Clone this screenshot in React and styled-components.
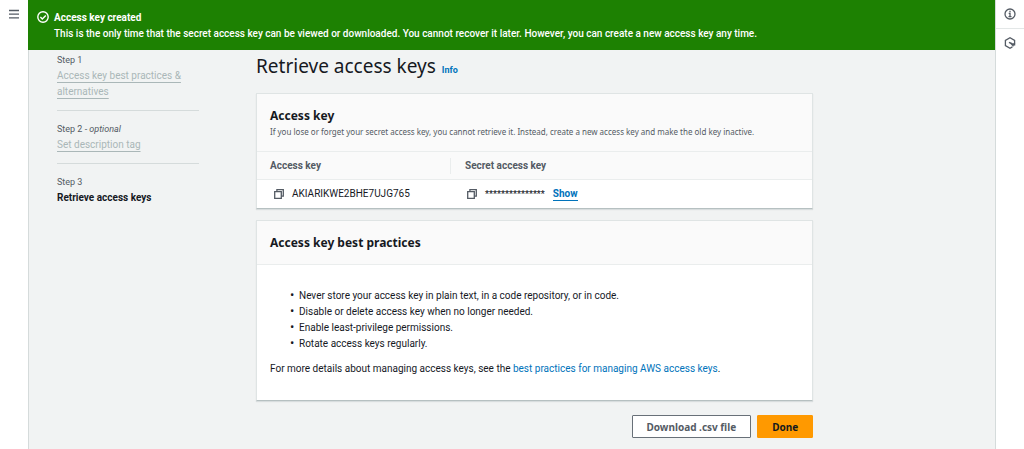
import React, { useState } from "react";
import styled, { createGlobalStyle } from "styled-components";

const displayFont = `"Noto Sans", "Open Sans", sans-serif`;

const GlobalStyle = createGlobalStyle`
  * {
    box-sizing: border-box;
  }
  body {
    margin: 0;
    background: #f1f3f3;
    color: #16191f;
    font-family: Roboto, "Open Sans", sans-serif;
    font-size: 10px;
    line-height: 16px;
  }
`;

const Shell = styled.div`
  display: grid;
  grid-template-columns: 28px minmax(0, 1fr) 28px;
  min-height: 100vh;
`;

const Rail = styled.aside`
  background: #fff;
`;

const RailButton = styled.button`
  display: flex;
  align-items: center;
  justify-content: center;
  width: 100%;
  height: 29px;
  padding: 0;
  border: none;
  border-bottom: 1px solid ${({ $divided }) => ($divided ? "#e3e7e7" : "transparent")};
  background: none;
  color: #545b64;
  cursor: pointer;
`;

const Main = styled.main`
  border-right: 1px solid #d5dbdb;
  box-shadow: inset 1px 0 #d5dbdb;
`;

const Flash = styled.div`
  display: flex;
  gap: 5px;
  padding: 9px 9px 8px;
  background: #1d8102;
  color: #fff;
  font-weight: 500;
`;

const FlashText = styled.p`
  margin: 0;
  padding-top: 1px;
`;

const FlashTitle = styled.strong`
  display: block;
  font-weight: 700;
`;

const Wizard = styled.div`
  display: grid;
  grid-template-columns: 142px minmax(0, 1fr);
  column-gap: 57px;
  padding: 0 18.8% 0 29px;
`;

const Steps = styled.ol`
  margin: 0;
  padding: 0;
  list-style: none;
`;

const Step = styled.li`
  padding: ${({ $first }) => ($first ? "2px" : "10px")} 0 10px;

  & + & {
    border-top: 1px solid #d5dbdb;
  }
`;

const StepLabel = styled.span`
  display: block;
  color: #545b64;
  font-size: 9px;
`;

const StepLink = styled.a`
  color: #aab7b8;
  text-decoration: underline;
  text-underline-offset: 3px;
`;

const StepCurrent = styled.strong`
  color: #16191f;
`;

const Content = styled.div`
  display: flex;
  flex-direction: column;
`;

const Heading = styled.div`
  display: flex;
  align-items: baseline;
  gap: 6px;
  padding: 4px 0 15px;
`;

const Title = styled.h1`
  margin: 0;
  font-family: ${displayFont};
  font-size: 19px;
  font-weight: 400;
  line-height: 24px;
`;

const InfoLink = styled.a`
  color: #0073bb;
  font-size: 9px;
  font-weight: 700;
  text-decoration: none;
`;

const Card = styled.section`
  margin-bottom: 11px;
  background: #fff;
  border: 1px solid #dfe4e4;
  border-bottom-color: #b6c0c1;
  box-shadow: 0 1px 1px rgba(0, 28, 36, 0.1);
`;

const CardHeader = styled.header`
  padding: 13px 13px 12px;
  background: #fafafa;
  border-bottom: 1px solid #eaeded;
`;

const CardTitle = styled.h2`
  margin: 0;
  font-family: ${displayFont};
  font-size: 12px;
  font-weight: 700;
  line-height: 18px;
`;

const CardHint = styled.p`
  margin: 0;
  color: #545b64;
  font-family: ${displayFont};
  font-size: 8px;
  line-height: 14px;
`;

const KeyTable = styled.table`
  width: 100%;
  border-collapse: collapse;
  table-layout: fixed;
`;

const HeadCell = styled.th`
  padding: 6px 0 5px;
  width: ${({ $width }) => $width};
  background: #fafafa;
  border-bottom: 1px solid #eaeded;
  color: #545b64;
  text-align: left;
`;

const HeadText = styled.span`
  display: block;
  padding-left: ${({ $divided }) => ($divided ? "14px" : "13px")};
  border-left: ${({ $divided }) => ($divided ? "1px solid #eaeded" : "none")};
`;

const Cell = styled.td`
  padding: 6px 17px;
`;

const KeyValue = styled.div`
  display: flex;
  align-items: center;
  gap: 8px;
`;

const Masked = styled.span`
  font-size: 9px;
  font-weight: 500;
`;

const IconButton = styled.button`
  display: flex;
  padding: 0;
  border: none;
  background: none;
  color: #545b64;
  cursor: pointer;
`;

const ShowButton = styled.button`
  padding: 0;
  border: none;
  border-bottom: 1px solid #0073bb;
  background: none;
  color: #0073bb;
  font: inherit;
  font-weight: 700;
  line-height: 12px;
  cursor: pointer;
`;

const CardBody = styled.div`
  padding: 23px 13px;
`;

const Practices = styled.ul`
  margin: 0 0 9px;
  padding-left: 29px;
  list-style-type: "•  ";

  li::marker {
    font-weight: 900;
  }
`;

const Note = styled.p`
  margin: 0;
`;

const NoteLink = styled.a`
  color: #0073bb;
  text-decoration: none;
`;

const Actions = styled.div`
  display: flex;
  justify-content: flex-end;
  gap: 6px;
  padding: 3px 0 11px;
`;

const Button = styled.button`
  height: 23px;
  padding: 0 14px;
  border: 1px solid ${({ $primary }) => ($primary ? "#ff9900" : "#687078")};
  border-radius: 1px;
  background: ${({ $primary }) => ($primary ? "#ff9900" : "#fff")};
  color: ${({ $primary }) => ($primary ? "#16191f" : "#545b64")};
  font-family: ${displayFont};
  font-size: 10px;
  font-weight: 700;
  cursor: pointer;
`;

const MenuIcon = () => (
  <svg width="12" height="12" viewBox="0 0 12 12" stroke="currentColor" strokeWidth="1.3" aria-hidden="true">
    <path d="M1 2.5h10M1 6.2h10M1 9.9h10" />
  </svg>
);

const InfoIcon = () => (
  <svg width="12" height="12" viewBox="0 0 12 12" fill="none" stroke="currentColor" strokeWidth="1.3" aria-hidden="true">
    <circle cx="6" cy="6" r="5" />
    <path d="M6 2.8v1.4M4.7 5.4H6v3.2M4.5 8.6h3" />
  </svg>
);

const HexIcon = () => (
  <svg width="12" height="12" viewBox="0 0 12 12" fill="none" stroke="currentColor" strokeWidth="1.3" aria-hidden="true">
    <path d="M8.4 9.9L6 11.2 1.4 8.6V3.4L6 .8l4.6 2.6v5" />
    <path d="M5 5.4l3 1.4" strokeWidth="1.6" />
    <path d="M6.6 6.6h4.2L9 9.4z" fill="currentColor" strokeWidth=".6" />
  </svg>
);

const CheckIcon = () => (
  <svg width="12" height="16" viewBox="0 0 12 16" fill="none" stroke="currentColor" strokeWidth="1.4" aria-hidden="true">
    <circle cx="6" cy="8" r="5.2" />
    <path d="M3.4 8l1.9 1.9L8.8 6.4" />
  </svg>
);

const CopyIcon = () => (
  <svg width="10" height="10" viewBox="0 0 10 10" fill="none" stroke="currentColor" strokeWidth="1.3" aria-hidden="true">
    <path d="M.7 2.7h6.6v6.6H.7z" />
    <path d="M2.9 2.6V.7h6.4v6.4H7.4" />
  </svg>
);

const practices = [
  "Never store your access key in plain text, in a code repository, or in code.",
  "Disable or delete access key when no longer needed.",
  "Enable least-privilege permissions.",
  "Rotate access keys regularly.",
];

const App = () => {
  const [shown, setShown] = useState(false);

  return (
    <>
      <GlobalStyle />
      <Shell>
        <Rail>
          <RailButton aria-label="Open navigation"><MenuIcon /></RailButton>
        </Rail>
        <Main>
          <Flash role="status">
            <CheckIcon />
            <FlashText>
              <FlashTitle>Access key created</FlashTitle>
              This is the only time that the secret access key can be viewed or downloaded. You cannot recover it later. However, you can create a new access key any time.
            </FlashText>
          </Flash>
          <Wizard>
            <Steps>
              <Step $first>
                <StepLabel>Step 1</StepLabel>
                <StepLink href="#practices">Access key best practices &amp; alternatives</StepLink>
              </Step>
              <Step>
                <StepLabel>Step 2 - <em>optional</em></StepLabel>
                <StepLink href="#tag">Set description tag</StepLink>
              </Step>
              <Step aria-current="step">
                <StepLabel>Step 3</StepLabel>
                <StepCurrent>Retrieve access keys</StepCurrent>
              </Step>
            </Steps>
            <Content>
              <Heading>
                <Title>Retrieve access keys</Title>
                <InfoLink href="#info">Info</InfoLink>
              </Heading>
              <Card>
                <CardHeader>
                  <CardTitle>Access key</CardTitle>
                  <CardHint>If you lose or forget your secret access key, you cannot retrieve it. Instead, create a new access key and make the old key inactive.</CardHint>
                </CardHeader>
                <KeyTable>
                  <thead>
                    <tr>
                      <HeadCell $width="193px"><HeadText>Access key</HeadText></HeadCell>
                      <HeadCell><HeadText $divided>Secret access key</HeadText></HeadCell>
                    </tr>
                  </thead>
                  <tbody>
                    <tr>
                      <Cell>
                        <KeyValue>
                          <IconButton aria-label="Copy access key"><CopyIcon /></IconButton>
                          AKIARIKWE2BHE7UJG765
                        </KeyValue>
                      </Cell>
                      <Cell>
                        <KeyValue>
                          <IconButton aria-label="Copy secret access key"><CopyIcon /></IconButton>
                          <Masked>***************</Masked>
                          <ShowButton aria-pressed={shown} onClick={() => setShown(!shown)}>Show</ShowButton>
                        </KeyValue>
                      </Cell>
                    </tr>
                  </tbody>
                </KeyTable>
              </Card>
              <Card>
                <CardHeader>
                  <CardTitle>Access key best practices</CardTitle>
                </CardHeader>
                <CardBody>
                  <Practices>
                    {practices.map((text) => <li key={text}>{text}</li>)}
                  </Practices>
                  <Note>
                    For more details about managing access keys, see the <NoteLink href="#docs">best practices for managing AWS access keys</NoteLink>.
                  </Note>
                </CardBody>
              </Card>
              <Actions>
                <Button>Download .csv file</Button>
                <Button $primary>Done</Button>
              </Actions>
            </Content>
          </Wizard>
        </Main>
        <Rail>
          <RailButton $divided aria-label="Info"><InfoIcon /></RailButton>
          <RailButton aria-label="Diagnostics"><HexIcon /></RailButton>
        </Rail>
      </Shell>
    </>
  );
};

export default App;
